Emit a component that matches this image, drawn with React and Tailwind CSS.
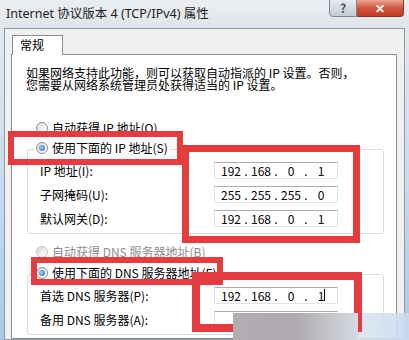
import React from 'react';

const cjk = "font-['Noto_Sans_CJK_SC','Noto_Sans',sans-serif]";

const Radio = ({ checked, disabled }) => (
    <span
        className={`w-[12px] h-[12px] shrink-0 rounded-full border flex items-center justify-center bg-gradient-to-br from-[#dcdcdc] to-white ${
            disabled ? 'border-[#c4c4c4]' : 'border-[#8e8f8f]'
        }`}
    >
        {checked && (
            <span className="w-[6px] h-[6px] rounded-full bg-[radial-gradient(circle_at_40%_40%,#9ad6f7,#1d5fa8)]" />
        )}
    </span>
);

const RadioRow = ({ checked, disabled, label, className = '' }) => (
    <div className={`h-[16px] flex items-center gap-[4px] ${className}`}>
        <Radio checked={checked} disabled={disabled} />
        <span className={`text-[12px] whitespace-nowrap ${disabled ? 'text-[#8d8d8d]' : 'text-black'}`}>{label}</span>
    </div>
);

const IpField = ({ parts, caret }) => (
    <div className="w-[124px] h-[17px] border border-[#dde2e8] border-t-[#abadb3] bg-white flex items-center pl-[4px] text-[12px] text-black">
        {parts ? (
            parts.map((p, i) => (
                <React.Fragment key={i}>
                    <span className="w-[24px] text-center relative">
                        {p}
                        {caret && i === 3 && <span className="absolute top-[2px] left-[15px] w-px h-[12px] bg-black" />}
                    </span>
                    {i < 3 && <span className="w-[6px] text-center">.</span>}
                </React.Fragment>
            ))
        ) : null}
    </div>
);

const FieldRow = ({ label, parts, caret }) => (
    <div className="h-[17px] flex items-center">
        <span className="w-[174px] text-[12px] text-black whitespace-nowrap">{label}</span>
        <IpField parts={parts} caret={caret} />
    </div>
);

const GroupBox = ({ caption, children }) => (
    <div className="ml-[15px] w-[357px] border border-[#d5dfe5] rounded-[3px] pb-[6px]">
        <div className="-mt-[10px] ml-[6px] px-[2px] w-fit bg-white">{caption}</div>
        <div className="mt-[6px] pl-[12px] flex flex-col gap-[7px]">{children}</div>
    </div>
);

export default function App() {
    return (
        <div className={`relative w-[409px] h-[340px] overflow-hidden flex flex-col bg-gradient-to-b from-[#e6eaee] via-[#cbdcee] to-[#a9c8e8] ${cjk}`}>
            {/* title bar */}
            <div className="h-[28px] shrink-0 flex items-start justify-between bg-gradient-to-b from-[#eceef1] to-[#dfe5eb]">
                <span className="pl-[6px] pt-[5px] text-[12.5px] text-[#1c1c1c] whitespace-nowrap font-['Noto_Sans','Noto_Sans_CJK_SC',sans-serif]">
                    Internet 协议版本 4 (TCP/IPv4) 属性
                </span>
                <div className="flex mr-[5px] -mt-px">
                    <div className="w-[28px] h-[18px] rounded-bl-[4px] border border-[#7d8590] bg-gradient-to-b from-[#e6eaef] to-[#c3cbd4] flex items-center justify-center text-[12px] font-bold text-[#4a525c]">
                        ?
                    </div>
                    <div className="w-[47px] h-[18px] rounded-br-[4px] border border-l-0 border-[#7d3a34] bg-gradient-to-b from-[#e9a593] via-[#d2553d] to-[#c23a27] flex items-center justify-center text-[12px] font-bold text-white">
                        ✕
                    </div>
                </div>
            </div>

            {/* dialog body */}
            <div className="mx-[4px] flex-1 border border-[#8d9aa6] bg-[#f0f0f0] pt-[6px] flex flex-col">
                <div className="ml-[7px] w-[51px] h-[20px] -mb-px relative z-10 border border-b-0 border-[#898c95] bg-white pl-[7px] text-[12px] leading-[18px] text-black">
                    常规
                </div>
                <div className="ml-[6px] w-[386px] flex-1 border border-[#898c95] bg-white">
                    <p className="pt-[12px] pl-[14px] text-[12px] leading-[12px] text-black whitespace-nowrap">
                        如果网络支持此功能，则可以获取自动指派的 IP 设置。否则，
                        <br />
                        您需要从网络系统管理员处获得适当的 IP 设置。
                    </p>

                    <RadioRow className="mt-[29px] ml-[24px]" label="自动获得 IP 地址(O)" />

                    <div className="mt-[13px]">
                        <GroupBox caption={<RadioRow checked label="使用下面的 IP 地址(S)" />}>
                            <FieldRow label="IP 地址(I):" parts={['192', '168', '0', '1']} />
                            <FieldRow label="子网掩码(U):" parts={['255', '255', '255', '0']} />
                            <FieldRow label="默认网关(D):" parts={['192', '168', '0', '1']} />
                        </GroupBox>
                    </div>

                    <RadioRow className="mt-[10px] ml-[24px]" disabled label="自动获得 DNS 服务器地址(B)" />

                    <div className="mt-[14px]">
                        <GroupBox caption={<RadioRow checked label="使用下面的 DNS 服务器地址(E):" />}>
                            <FieldRow label="首选 DNS 服务器(P):" parts={['192', '168', '0', '1']} caret />
                            <FieldRow label="备用 DNS 服务器(A):" />
                        </GroupBox>
                    </div>
                </div>
            </div>

            {/* bottom-right blur */}
            <div className="absolute left-[338px] top-[313px] w-[71px] h-[27px] bg-gradient-to-r from-[#e4e9f0] to-[#c7dbef] opacity-90" />

            {/* red annotation boxes */}
            <div className="absolute left-[8px] top-[131px] w-[175px] h-[34px] border-[6px] border-[#e53c40]" />
            <div className="absolute left-[182px] top-[145px] w-[178px] h-[98px] border-[7px] border-[#e53c40]" />
            <div className="absolute left-[31px] top-[257px] w-[192px] h-[28px] border-[6px] border-[#e53c40]" />
            <div className="absolute left-[192px] top-[272px] w-[170px] h-[60px] border-[8px] border-[#e53c40]" />

            {/* grey smudge */}
            <div className="absolute left-[233px] top-[313px] w-[125px] h-[27px] bg-gradient-to-r from-[#b3adb3] via-[#aeaab0] to-[#d6dbe3]" />
        </div>
    );
}
